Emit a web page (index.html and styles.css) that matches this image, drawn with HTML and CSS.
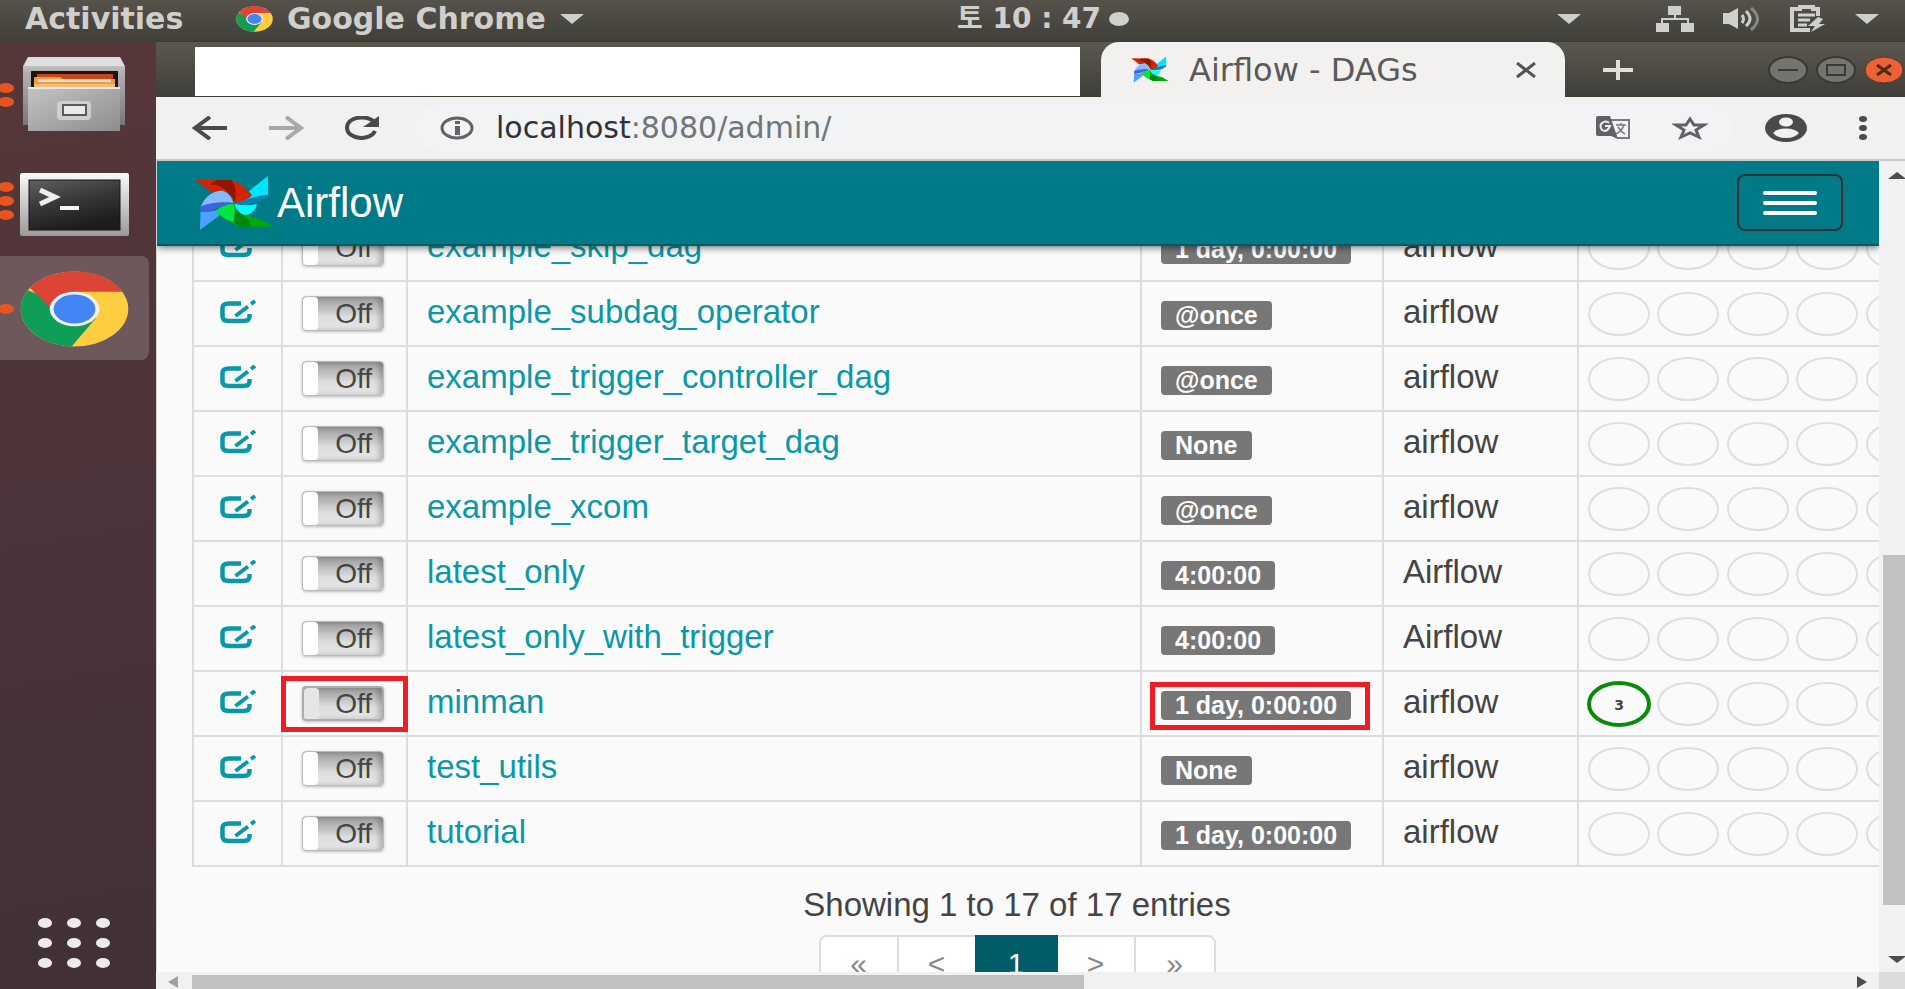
FILE: index.html
```html
<!DOCTYPE html>
<html lang="en">
<head>
<meta charset="utf-8">
<title>Airflow - DAGs</title>
<link rel="stylesheet" href="styles.css">
</head>
<body>
<svg class="defs" aria-hidden="true">
  <symbol id="chrome" viewBox="-38 -38 76 76" preserveAspectRatio="none">
    <circle r="37.5" fill="#ffcd40"/>
    <path d="M0 0L-32.5 -18.7A37.5 37.5 0 0 0 -2 37.4L15 9Z" fill="#0f9d58"/>
    <path d="M0 0L-31 -21A37.5 37.5 0 0 1 33.5 -17.3H0Z" fill="#db4437"/>
    <path d="M-31 -21L-16 0L0 -17.3Z" fill="#db4437"/>
    <circle r="17.3" fill="#f1f1f1"/><circle r="14.6" fill="#4285f4"/>
  </symbol>
  <symbol id="pinwheel" viewBox="40 31 244 170" preserveAspectRatio="none">
    <path d="M42 45L153 46Q185 55 217 92Q200 116 163 116Q158 90 127 78L95 84Z" fill="#d42300"/>
    <path d="M110 46H153Q175 70 164 112Q150 80 112 62L88 60Z" fill="#7d1200" opacity=".75"/>
    <path d="M266 33V92Q230 125 163 118Q205 110 217 92L207 80Z" fill="#00e5ff"/>
    <path d="M266 90Q225 95 163 118Q220 128 264 98Z" fill="#0a7fb4"/>
    <path d="M163 118Q200 127 232 119Q225 150 195 153Q170 145 163 118Z" fill="#00ffff"/>
    <path d="M160 118Q172 150 200 154Q240 160 282 188H180Q130 165 106 140Q125 120 160 118Z" fill="#00a80a"/>
    <path d="M160 118Q172 150 200 154L215 188H180L160 172Z" fill="#007a10" opacity=".7"/>
    <path d="M106 140Q125 120 160 118Q168 140 160 174Q130 165 106 140Z" fill="#00e640"/>
    <path d="M160 116Q120 110 60 128Q80 80 127 78Q155 90 160 116Z" fill="#86b9ff"/>
    <path d="M160 116Q110 108 60 126V145Q100 140 120 128Z" fill="#3f63dc"/>
    <path d="M60 143Q90 145 108 138L118 154L58 198Z" fill="#48a2ff"/>
  </symbol>
  <symbol id="edit" viewBox="0 0 36 24">
    <path d="M21 3.500H9Q2.500 3.500 2.500 8V16.500Q2.500 21 9 21H23Q29.500 21 29.500 16.500V14" fill="none" stroke="#0a98a8" stroke-width="4.500"/>
    <path d="M15.500 16L28 6.500M31 4L35 1" fill="none" stroke="#0a98a8" stroke-width="4"/>
  </symbol>
  <symbol id="runs" viewBox="0 0 301 50">
    <g fill="none" stroke="#dedede" stroke-width="2">
      <ellipse cx="40" cy="25" rx="30" ry="21"/><ellipse cx="109" cy="25" rx="30" ry="21"/><ellipse cx="179" cy="25" rx="30" ry="21"/><ellipse cx="248" cy="25" rx="30" ry="21"/><ellipse cx="318" cy="25" rx="30" ry="21"/>
    </g>
  </symbol>
</svg>

<header class="topbar">
  <button class="activities">Activities</button>
  <button class="appmenu">
    <svg width="37" height="26"><use href="#chrome"/></svg>
    <span>Google Chrome</span>
    <svg width="24" height="10" viewBox="0 0 24 10"><path d="M0 0H24L12 10Z" fill="#d0cfcc"/></svg>
  </button>
  <div class="clock"><span>토 10 : 47</span><svg width="20" height="14" viewBox="0 0 20 14"><ellipse cx="10" cy="7" rx="10" ry="7" fill="#d0cfcc"/></svg></div>
  <div class="status">
    <svg class="caret" width="24" height="10" viewBox="0 0 24 10"><path d="M0 0H24L12 10Z" fill="#d0cfcc"/></svg>
    <svg width="38" height="26" viewBox="0 0 38 26" fill="#d0cfcc"><path d="M12 0H25V9H12ZM0 17H13V26H0ZM25 17H38V26H25Z"/><path d="M19 9V13M6 17V13H32V17" fill="none" stroke="#d0cfcc" stroke-width="2"/></svg>
    <svg width="38" height="24" viewBox="0 0 38 24" fill="none"><path d="M0 6H6L15 1V22L6 17H0Z" fill="#d0cfcc"/><path d="M19 8Q22 12 19 16" stroke="#d0cfcc" stroke-width="3"/><path d="M23 4Q31 12 23 19" stroke="#d0cfcc" stroke-width="3"/><path d="M28 1Q41 12 28 23" stroke="#8a8880" stroke-width="3"/></svg>
    <svg width="36" height="28" viewBox="0 0 36 28" fill="none" stroke="#d0cfcc"><path d="M28 11V4H23V2H10V4H2V25H20" stroke-width="4"/><path d="M8 10H25M8 15H20M8 20H17" stroke-width="3"/><path d="M28 12L18 21H25L21 27L35 19H29L33 14Z" fill="#d0cfcc" stroke="none"/></svg>
    <svg width="24" height="10" viewBox="0 0 24 10"><path d="M0 0H24L12 10Z" fill="#d0cfcc"/></svg>
  </div>
</header>

<div class="desktop">
  <nav class="dock" aria-label="Dock">
    <button class="tile" aria-label="Files">
      <svg viewBox="0 41 149 104">
        <defs><linearGradient id="steel" x2="1" y2="1"><stop stop-color="#c4c4c4"/><stop offset="1" stop-color="#8d8d8d"/></linearGradient>
        <linearGradient id="steelTop" x2="0" y2="1"><stop stop-color="#d8d8d8"/><stop offset=".2" stop-color="#b4b4b4"/><stop offset="1" stop-color="#777"/></linearGradient></defs>
        <g fill="#e95420"><ellipse cx="6" cy="88" rx="8" ry="5"/><ellipse cx="6" cy="102" rx="8" ry="5"/></g>
        <path d="M28 57H120L125 66V125H23V66Z" fill="url(#steelTop)"/>
        <path d="M28 58H120L124 66H24Z" fill="#dedede"/>
        <path d="M31 71H118V87H31Z" fill="#1b1512"/>
        <path d="M37 74H113V88H37Z" fill="#c9441a"/>
        <path d="M34 77H60L63 79H115V88H34Z" fill="#ee9c3c"/>
        <path d="M38 79H111V82H38Z" fill="#f6dfc8"/><path d="M34 84H115V88H34Z" fill="#eebd7b"/>
        <path d="M28 87H120V131H28Z" fill="url(#steel)"/><path d="M28 87H120V89H28Z" fill="#e8e8e8"/>
        <rect x="57" y="101" width="34" height="19" rx="4" fill="#cfcfcf"/><rect x="63" y="105" width="23" height="10" fill="#e9e9e9" stroke="#5a5a5a" stroke-width="2"/>
      </svg>
    </button>
    <button class="tile" aria-label="Terminal">
      <svg viewBox="0 148 149 104">
        <defs><linearGradient id="frame" x2="0" y2="1"><stop stop-color="#fafafa"/><stop offset="1" stop-color="#999"/></linearGradient>
        <linearGradient id="screen" x2=".4" y2="1"><stop stop-color="#606060"/><stop offset=".5" stop-color="#383838"/><stop offset="1" stop-color="#1c1c1c"/></linearGradient></defs>
        <g fill="#e95420"><ellipse cx="6" cy="187" rx="8" ry="5"/><ellipse cx="6" cy="201" rx="8" ry="5"/><ellipse cx="6" cy="215" rx="8" ry="5"/></g>
        <rect x="20" y="173" width="109" height="63" rx="2" fill="url(#frame)"/>
        <rect x="29" y="180" width="91" height="50" fill="url(#screen)" stroke="#151515" stroke-width="1"/>
        <path d="M40 190L55 197L40 204" fill="none" stroke="#eee" stroke-width="5"/><path d="M60 208H79" stroke="#f5f5f5" stroke-width="4"/>
      </svg>
    </button>
    <button class="tile active" aria-label="Google Chrome">
      <svg viewBox="0 255 149 104"><ellipse cx="6" cy="308" rx="8" ry="5" fill="#e95420"/><use href="#chrome" x="20" y="270" width="109" height="76"/></svg>
    </button>
    <button class="apps" aria-label="Show applications">
      <svg width="74" height="52" viewBox="0 0 74 52" fill="#eeeceb"><ellipse cx="8" cy="6" rx="7" ry="5"/><ellipse cx="37" cy="6" rx="7" ry="5"/><ellipse cx="66" cy="6" rx="7" ry="5"/><ellipse cx="8" cy="26" rx="7" ry="5"/><ellipse cx="37" cy="26" rx="7" ry="5"/><ellipse cx="66" cy="26" rx="7" ry="5"/><ellipse cx="8" cy="46" rx="7" ry="5"/><ellipse cx="37" cy="46" rx="7" ry="5"/><ellipse cx="66" cy="46" rx="7" ry="5"/></svg>
    </button>
  </nav>

  <div class="window">
    <div class="tabstrip">
      <div class="blank"></div>
      <div class="tab">
        <svg width="38" height="27"><use href="#pinwheel"/></svg>
        <span class="tabtitle">Airflow - DAGs</span>
        <button aria-label="Close tab"><svg width="22" height="16" viewBox="0 0 22 16"><path d="M2 1L20 15M20 1L2 15" stroke="#55524f" stroke-width="3"/></svg></button>
      </div>
      <button class="newtab" aria-label="New tab"><svg width="30" height="20" viewBox="0 0 30 20"><path d="M0 10H30M15 0V20" stroke="#e2ded6" stroke-width="4"/></svg></button>
      <div class="controls">
        <button aria-label="Minimize"><svg width="42" height="30" viewBox="0 0 42 30"><ellipse cx="21" cy="15" rx="19" ry="13" fill="#74736d" stroke="#393833" stroke-width="2"/><path d="M11 15H31" stroke="#3a3934" stroke-width="2"/></svg></button>
        <button aria-label="Maximize"><svg width="42" height="30" viewBox="0 0 42 30"><ellipse cx="21" cy="15" rx="19" ry="13" fill="#74736d" stroke="#393833" stroke-width="2"/><path d="M12 10H30V20H12Z" fill="none" stroke="#3a3934" stroke-width="2"/></svg></button>
        <button aria-label="Close"><svg width="42" height="30" viewBox="0 0 42 30"><ellipse cx="21" cy="15" rx="19" ry="13" fill="#ec6236" stroke="#5a3328" stroke-width="1"/><path d="M14 10L28 20M28 10L14 20" stroke="#4d2a14" stroke-width="3"/></svg></button>
      </div>
    </div>

    <div class="toolbar">
      <button aria-label="Back"><svg width="36" height="24" viewBox="0 0 36 24" fill="none" stroke="#4a4a4a" stroke-width="4"><path d="M35 12H4M18 1L3 12L18 23"/></svg></button>
      <button aria-label="Forward"><svg width="36" height="24" viewBox="0 0 36 24" fill="none" stroke="#aaa8a6" stroke-width="4"><path d="M1 12H32M18 1L33 12L18 23"/></svg></button>
      <button aria-label="Reload"><svg width="36" height="24" viewBox="0 0 36 24"><path d="M31 6C21 -2 3 1 3 12C3 23 26 26 31 15" fill="none" stroke="#4a4a4a" stroke-width="4"/><path d="M35 0V11H19Z" fill="#4a4a4a"/></svg></button>
      <div class="omnibox">
        <svg width="35" height="24" viewBox="0 0 35 24"><ellipse cx="17" cy="12" rx="15" ry="10" fill="none" stroke="#606368" stroke-width="3"/><path d="M15 5H20V8H15ZM15 10H20V19H15Z" fill="#606368"/></svg>
        <p class="url"><span>localhost</span>:8080/admin/</p>
        <button aria-label="Translate"><svg width="36" height="24" viewBox="0 0 36 24"><path d="M15 4H33V22H21" fill="#f1f3f4" stroke="#777b80" stroke-width="2"/><path d="M2 0H14L22 23L15 20H2Q0 20 0 18V2Q0 0 2 0Z" fill="#5f6368"/><path d="M13 7Q10 4 6 7Q3 10 6 14Q11 17 14 10H9" fill="none" stroke="#e9ebec" stroke-width="2"/><path d="M20 9H30M25 7V9M28 9Q26 15 20 18M22 11Q25 16 29 18" fill="none" stroke="#777b80" stroke-width="1.500"/></svg></button>
        <button aria-label="Bookmark"><svg width="36" height="24" viewBox="0 0 36 24"><path d="M18 3L22 9H32L24 14L27 21L18 17L9 21L12 14L4 9H14Z" fill="none" stroke="#5f6368" stroke-width="3"/></svg></button>
      </div>
      <button aria-label="Profile"><svg width="44" height="30" viewBox="0 0 44 30"><ellipse cx="22" cy="15" rx="21" ry="14" fill="#4a4a4a"/><ellipse cx="22" cy="9" rx="7" ry="4.500" fill="#f2f1f0"/><path d="M9 20Q13 15.500 22 15.500Q31 15.500 35 20Q31 25 22 25Q13 25 9 20Z" fill="#f2f1f0"/></svg></button>
      <button class="more" aria-label="Menu"><svg width="8" height="24" viewBox="0 0 8 24" fill="#4a4a4a"><ellipse cx="4" cy="3" rx="4" ry="3"/><ellipse cx="4" cy="12" rx="4" ry="3"/><ellipse cx="4" cy="21" rx="4" ry="3"/></svg></button>
    </div>

    <div class="viewport">
      <div class="page">
        <div class="navbar">
          <a class="brand" href="#"><svg width="80" height="56"><use href="#pinwheel"/></svg><span>Airflow</span></a>
          <button class="burger" aria-label="Toggle navigation"><span></span><span></span><span></span></button>
        </div>
        <main class="content">
          <table class="dags">
            <colgroup><col class="c-edit"><col class="c-toggle"><col><col class="c-sched"><col class="c-owner"><col class="c-runs"></colgroup>
            <tbody>
              <tr><td><a href="#" aria-label="Edit"><svg width="36" height="24"><use href="#edit"/></svg></a></td><td><label class="toggle"><input type="checkbox">Off</label></td><td><a href="#">example_skip_dag</a></td><td><span class="badge">1 day, 0:00:00</span></td><td>airflow</td><td><svg width="301" height="50"><use href="#runs"/></svg></td></tr>
              <tr><td><a href="#" aria-label="Edit"><svg width="36" height="24"><use href="#edit"/></svg></a></td><td><label class="toggle"><input type="checkbox">Off</label></td><td><a href="#">example_subdag_operator</a></td><td><span class="badge">@once</span></td><td>airflow</td><td><svg width="301" height="50"><use href="#runs"/></svg></td></tr>
              <tr><td><a href="#" aria-label="Edit"><svg width="36" height="24"><use href="#edit"/></svg></a></td><td><label class="toggle"><input type="checkbox">Off</label></td><td><a href="#">example_trigger_controller_dag</a></td><td><span class="badge">@once</span></td><td>airflow</td><td><svg width="301" height="50"><use href="#runs"/></svg></td></tr>
              <tr><td><a href="#" aria-label="Edit"><svg width="36" height="24"><use href="#edit"/></svg></a></td><td><label class="toggle"><input type="checkbox">Off</label></td><td><a href="#">example_trigger_target_dag</a></td><td><span class="badge">None</span></td><td>airflow</td><td><svg width="301" height="50"><use href="#runs"/></svg></td></tr>
              <tr><td><a href="#" aria-label="Edit"><svg width="36" height="24"><use href="#edit"/></svg></a></td><td><label class="toggle"><input type="checkbox">Off</label></td><td><a href="#">example_xcom</a></td><td><span class="badge">@once</span></td><td>airflow</td><td><svg width="301" height="50"><use href="#runs"/></svg></td></tr>
              <tr><td><a href="#" aria-label="Edit"><svg width="36" height="24"><use href="#edit"/></svg></a></td><td><label class="toggle"><input type="checkbox">Off</label></td><td><a href="#">latest_only</a></td><td><span class="badge">4:00:00</span></td><td>Airflow</td><td><svg width="301" height="50"><use href="#runs"/></svg></td></tr>
              <tr><td><a href="#" aria-label="Edit"><svg width="36" height="24"><use href="#edit"/></svg></a></td><td><label class="toggle"><input type="checkbox">Off</label></td><td><a href="#">latest_only_with_trigger</a></td><td><span class="badge">4:00:00</span></td><td>Airflow</td><td><svg width="301" height="50"><use href="#runs"/></svg></td></tr>
              <tr><td><a href="#" aria-label="Edit"><svg width="36" height="24"><use href="#edit"/></svg></a></td><td class="marked mark-toggle"><label class="toggle hover"><input type="checkbox">Off</label></td><td><a href="#">minman</a></td><td class="marked mark-sched"><span class="badge">1 day, 0:00:00</span></td><td>airflow</td><td><svg width="301" height="50"><use href="#runs"/><ellipse cx="40" cy="25" rx="30" ry="21" fill="#fafafa" stroke="#0a8a0a" stroke-width="4"/><text class="count" x="40" y="31" text-anchor="middle">3</text></svg></td></tr>
              <tr><td><a href="#" aria-label="Edit"><svg width="36" height="24"><use href="#edit"/></svg></a></td><td><label class="toggle"><input type="checkbox">Off</label></td><td><a href="#">test_utils</a></td><td><span class="badge">None</span></td><td>airflow</td><td><svg width="301" height="50"><use href="#runs"/></svg></td></tr>
              <tr><td><a href="#" aria-label="Edit"><svg width="36" height="24"><use href="#edit"/></svg></a></td><td><label class="toggle"><input type="checkbox">Off</label></td><td><a href="#">tutorial</a></td><td><span class="badge">1 day, 0:00:00</span></td><td>airflow</td><td><svg width="301" height="50"><use href="#runs"/></svg></td></tr>
            </tbody>
          </table>
          <div class="footer">
            <p>Showing 1 to 17 of 17 entries</p>
            <nav class="pages" aria-label="Pages"><a href="#">«</a><a href="#">&lt;</a><a class="current" href="#">1</a><a href="#">&gt;</a><a href="#">»</a></nav>
          </div>
        </main>
      </div>
      <div class="vscroll">
        <svg width="17" height="7" viewBox="0 0 17 7"><path d="M0 7L9 0L17 6V7Z" fill="#4d4d4d"/></svg>
        <div class="vtrack"><div class="vthumb"></div></div>
        <svg width="17" height="7" viewBox="0 0 17 7"><path d="M0 0H17V1L9 7Z" fill="#4d4d4d"/></svg>
      </div>
      <div class="hscroll">
        <svg width="10" height="12" viewBox="0 0 10 12"><path d="M10 0V12L0 6Z" fill="#a0a0a0"/></svg>
        <div class="htrack"><div class="hthumb"></div></div>
        <svg width="10" height="12" viewBox="0 0 10 12"><path d="M0 0V12L10 6Z" fill="#4d4d4d"/></svg>
      </div>
      <div class="corner"></div>
    </div>
  </div>
</div>
</body>
</html>
```
FILE: styles.css
```css
* { box-sizing: border-box; }
body {
  margin: 0;
  height: 100vh;
  display: flex;
  flex-direction: column;
  overflow: hidden;
  font-family: "Liberation Sans", Arial, sans-serif;
  color: #444;
}
svg { display: block; flex: none; }
button { padding: 0; border: 0; background: none; color: inherit; font: inherit; flex: none; }
a { color: #0a98a8; text-decoration: none; }
p { margin: 0; }
.defs { position: absolute; width: 0; height: 0; }

.topbar {
  display: grid;
  grid-template-columns: 1fr auto 1fr;
  grid-template-rows: 41px;
  grid-template-areas: "left clock status";
  align-items: center;
  padding: 0 26px 4px 25px;
  height: 41px;
  background: linear-gradient(#55524a, #403f39);
  color: #d0cfcc;
  font: bold 30px/32px "DejaVu Sans", "Noto Sans CJK KR", sans-serif;
}
.activities { grid-area: left; justify-self: start; }
.appmenu { grid-area: left; justify-self: start; display: flex; align-items: center; gap: 14px; margin-left: 211px; }
.clock { grid-area: clock; display: flex; align-items: center; gap: 8px; font-size: 28px; margin-left: 182px; }
.status { grid-area: status; display: flex; align-items: center; justify-content: flex-end; gap: 29px; }
.status .caret { margin-right: 46px; }
.topbar { grid-template-rows: 37px; }

.desktop { flex: 1; display: flex; min-height: 0; }
.dock {
  width: 156px;
  flex: none;
  display: flex;
  flex-direction: column;
  gap: 3px;
  background: linear-gradient(170deg, #563738, #4b343a 50%, #413038);
}
.tile { width: 149px; height: 104px; border-radius: 0 8px 8px 0; }
.tile.active { margin-top: 1px; background: #6d595c; }
.apps { margin: auto 0 20px 37px; align-self: flex-start; }

.window { flex: 1; min-width: 0; display: flex; flex-direction: column; }
.tabstrip {
  height: 56px;
  display: flex;
  align-items: center;
  padding-left: 39px;
  border-top: 1px solid #3c3b37;
  background: linear-gradient(#5b584f, #3e3d38);
}
.blank { flex: 1; height: 49px; margin-top: 3px; background: #fff; }
.tab {
  width: 464px;
  height: 100%;
  margin-left: 21px;
  padding: 0 28px 0 30px;
  display: flex;
  align-items: center;
  border-radius: 18px 18px 0 0;
  background: #f2f1f0;
  color: #5c5a58;
  font: 32px/36px "DejaVu Sans", sans-serif;
}
.tabtitle { flex: 1; margin-left: 20px; white-space: nowrap; }
.newtab { margin-left: 38px; }
.controls { display: flex; gap: 6px; margin-left: 134px; }

.toolbar {
  height: 64px;
  display: flex;
  align-items: center;
  gap: 40px;
  padding: 0 38px 0 36px;
  background: #f2f1f0;
  border-bottom: 2px solid #c9c8c6;
}
.toolbar .omnibox {
  flex: 1;
  height: 46px;
  margin: 0 -9px 0 -6px;
  padding: 0 25px 0 26px;
  display: flex;
  align-items: center;
  gap: 40px;
  border-radius: 23px;
  background: #f1f3f4;
}
.url { flex: 1; margin-left: -19px; color: #70757a; font: 30px/36px "DejaVu Sans", sans-serif; }
.url span { color: #303236; }
.toolbar .more { margin-left: 11px; }

.viewport {
  flex: 1;
  min-height: 0;
  display: grid;
  grid-template-columns: minmax(0, 1fr) 26px;
  grid-template-rows: minmax(0, 1fr) 17px;
}
.page { overflow: hidden; background: #fafafa; border-left: 1px solid #d5d3d2; display: flex; flex-direction: column; }
.navbar {
  position: relative;
  z-index: 1;
  flex: none;
  height: 85px;
  display: flex;
  align-items: center;
  justify-content: space-between;
  padding: 0 36px 0 37px;
  background: #007a87;
  border-bottom: 2px solid #005c66;
  box-shadow: 0 2px 7px rgba(0, 0, 0, .5);
}
.brand { display: flex; align-items: center; gap: 3px; color: #fff; font-size: 42px; line-height: 44px; }
.burger {
  width: 106px;
  height: 57px;
  display: flex;
  flex-direction: column;
  align-items: center;
  justify-content: center;
  gap: 6px;
  border: 2px solid #333;
  border-radius: 8px;
}
.burger span { width: 54px; height: 4px; border-radius: 2px; background: #fff; }

.content { flex: none; margin-top: -30px; padding-left: 35px; }
.dags { width: 100%; table-layout: fixed; border-collapse: collapse; font-size: 33px; line-height: 36px; }
.c-edit { width: 89px; }
.c-toggle { width: 125px; }
.c-sched { width: 242px; }
.c-owner { width: 195px; }
.c-runs { width: 301px; }
.dags td { height: 65px; padding: 0 0 4px 19px; border: 2px solid #ddd; white-space: nowrap; }
.dags tr:first-child td { border-top: 0; }
.dags td:first-child { padding-left: 26px; }
.dags td:last-child { padding: 0; border-right: 0; overflow: hidden; }
.count { font: bold 14px "DejaVu Sans", sans-serif; fill: #444; }
.badge {
  display: inline-block;
  margin-top: 3px;
  padding: 0 14px;
  border-radius: 4px;
  background: #777;
  color: #fff;
  font-size: 25px;
  font-weight: bold;
  line-height: 29px;
  vertical-align: middle;
}
.toggle {
  display: flex;
  align-items: center;
  justify-content: space-between;
  width: 82px;
  height: 35px;
  margin-top: 4px;
  padding-right: 11px;
  border: 1px solid #bbb;
  border-radius: 4px;
  background: linear-gradient(#999, #ddd 60%, #e6e6e6);
  box-shadow: inset -4px 0 5px rgba(0, 0, 0, .2), 0 1px 3px rgba(0, 0, 0, .25);
  font-size: 28px;
  line-height: 32px;
}
.toggle input { appearance: none; width: 15px; height: 33px; margin: 0; border-radius: 4px; background: #fff; }
.toggle.hover { border: 2px solid #adadad; padding-right: 10px; }
.toggle.hover input { height: 31px; background: #e6e6e6; }
.marked { position: relative; }
.marked::after { content: ""; position: absolute; border: 5px solid #ee1c25; }
.mark-toggle::after { inset: 4px -2px 3px -2px; }
.mark-sched::after { inset: 10px 12px 5px 8px; }

.footer { display: flex; flex-direction: column; align-items: center; width: 1650px; max-width: 100%; font-size: 33px; line-height: 36px; }
.footer p { margin-top: 20px; }
.pages { display: flex; margin-top: 12px; border: 2px solid #ddd; border-radius: 8px; background: #fff; }
.pages a { width: 78px; height: 64px; padding-top: 5px; line-height: 44px; font-size: 30px; text-align: center; color: #888; border-right: 2px solid #ddd; }
.pages a:last-child { border-right: 0; }
.pages .current { margin: -2px 0 -2px -2px; width: 83px; height: 68px; padding-top: 7px; background: #005c66; color: #fff; border-right: 0; }

.vscroll { display: flex; flex-direction: column; align-items: flex-end; padding: 11px 0 9px; background: #f1f1f1; }
.vtrack { flex: 1; width: 22px; margin: 8px 0; display: flex; flex-direction: column; justify-content: flex-end; }
.vthumb { height: 46%; margin-bottom: 43px; background: #c1c1c1; }
.hscroll { display: flex; align-items: center; gap: 14px; padding: 3px 12px 0; background: #f1f1f1; }
.htrack { flex: 1; height: 100%; }
.hthumb { width: 54%; height: 100%; background: #c1c1c1; }
.corner { background: #dcdcdc; }
```
